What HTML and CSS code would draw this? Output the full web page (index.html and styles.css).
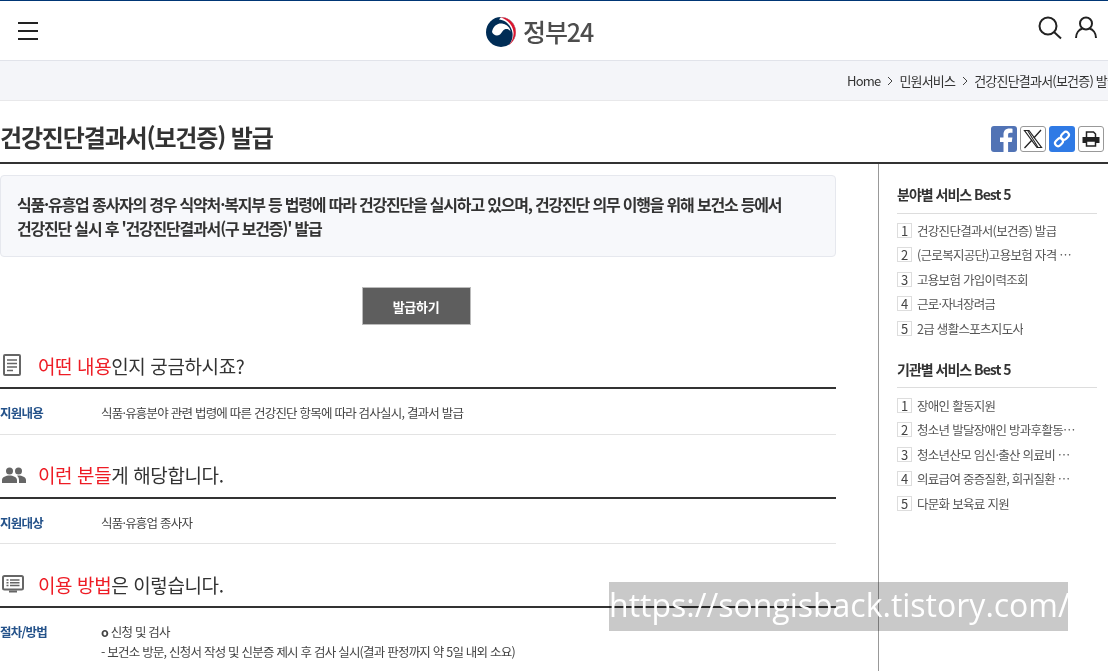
FILE: index.html
```html
<!DOCTYPE html>
<html lang="ko">
<head>
  <meta charset="UTF-8">
  <title>건강진단결과서(보건증) 발급 | 정부24</title>
  <link rel="stylesheet" href="styles.css">
</head>
<body>
  <!-- Header -->
  <div class="header">
    <svg class="menu-icon" width="20" height="18" viewBox="0 0 20 18"><path d="M0 1h20M0 9h20M0 17h20" stroke="#222" stroke-width="2"/></svg>
    <div class="logo">
      <svg width="30" height="30" viewBox="0 0 30 30">
        <circle cx="15" cy="15" r="15" fill="#002d56"/>
        <path d="M15 0A15 15 0 0 1 30 15C30 20 27.500 25 23 28C26 24 27 20 26.500 16C25.500 9 20 3 13 2.500Z" fill="#fff"/>
        <path d="M14 0.300A14.800 14.800 0 0 1 29.800 15C29.800 20 27 25.500 22.500 28.500C25.800 25 28 20 27.500 15C26.800 8 21 2 14 0.300Z" fill="#d9162f"/>
        <path d="M6 15C7 8.500 12 6 16 6.500C21 7 24.500 11 24.500 15C24 12.500 21.500 11.500 19.500 12C16.500 12.800 16 16 14 17.500C11 19.500 7.500 18.500 6 15Z" fill="#fff"/>
      </svg>
      <span class="logo-text">정부24</span>
    </div>
    <div class="header-icons">
      <svg width="24" height="24" viewBox="0 0 24 24" fill="none" stroke="#222" stroke-width="2"><circle cx="10" cy="10" r="8.500"/><path d="M16 16l7 6.500"/></svg>
      <svg width="22" height="24" viewBox="0 0 22 24" fill="none" stroke="#222" stroke-width="2"><circle cx="11" cy="7.500" r="6"/><path d="M1 22c0-5 3-8.500 6.500-9.500M21 22c0-5-3-8.500-6.500-9.500"/></svg>
    </div>
  </div>

  <!-- Breadcrumb -->
  <div class="breadcrumb">
    <span>Home</span>
    <svg class="crumb-arrow" width="6" height="10" viewBox="0 0 6 10"><path d="M1 1l4 4-4 4" fill="none" stroke="#444"/></svg>
    <span>민원서비스</span>
    <svg class="crumb-arrow" width="6" height="10" viewBox="0 0 6 10"><path d="M1 1l4 4-4 4" fill="none" stroke="#444"/></svg>
    <span>건강진단결과서(보건증) 발급</span>
  </div>

  <!-- Title -->
  <div class="title-row">
    <h1>건강진단결과서(보건증) 발급</h1>
    <div class="share">
      <span class="share-btn share-fb">
        <svg width="26" height="26" viewBox="0 0 26 26"><path d="M12.500 26V16H9v-4.500h3.500V8.500c0-4 2.400-6 5.800-6 1.500 0 2.800.1 3.200.2v4h-2.200c-1.800 0-2.200.9-2.200 2.200v2.600h4.300l-.6 4.500h-3.700v10z" fill="#fff"/></svg>
      </span>
      <span class="share-btn share-plain">
        <svg width="20" height="20" viewBox="0 0 20 20"><path d="M1.500 1.500h4.500l12.500 17H14z" fill="none" stroke="#222" stroke-width="1.200"/><path d="M4 1.500h1.200l10.500 17h-1.200z" fill="#222"/><path d="M18 1l-7.200 8M9 11l-7.500 8" stroke="#222" stroke-width="1.300" fill="none"/></svg>
      </span>
      <span class="share-btn share-link">
        <svg width="18" height="18" viewBox="0 0 18 18" fill="none" stroke="#fff" stroke-width="2.200"><rect x="9" y="1.500" width="6" height="8.500" rx="3" transform="rotate(45 12 5.700)"/><rect x="3" y="8" width="6" height="8.500" rx="3" transform="rotate(45 6 12.200)"/></svg>
      </span>
      <span class="share-btn share-plain">
        <svg width="18" height="16" viewBox="0 0 18 16"><path d="M4.500 6V1h7l2 2v3" fill="#fff" stroke="#222" stroke-width="1.500"/><path d="M0.500 6h17v6h-3.500v-2H4v2H0.500z" fill="#222"/><path d="M4.500 10h9v5h-9z" fill="#fff" stroke="#222" stroke-width="1.500"/></svg>
      </span>
    </div>
  </div>

  <div class="layout">
    <!-- Main column -->
    <div class="content">
      <div class="summary">식품·유흥업 종사자의 경우 식약처·복지부 등 법령에 따라 건강진단을 실시하고 있으며, 건강진단 의무 이행을 위해 보건소 등에서<br>건강진단 실시 후 '건강진단결과서(구 보건증)' 발급</div>

      <div class="action"><button class="issue-btn">발급하기</button></div>

      <div class="section-head">
        <span class="section-icon"><svg width="20" height="24" viewBox="0 0 20 24" fill="none"><rect x="2" y="2" width="16" height="20" rx="1" stroke="#666" stroke-width="2"/><path d="M5 7h10M5 10.500h10M5 14h10M5 17.500h6" stroke="#666" stroke-width="1.500"/></svg></span>
        <h2><em>어떤 내용</em>인지 궁금하시죠?</h2>
      </div>
      <div class="info-row">
        <div class="info-label">지원내용</div>
        <div class="info-text">식품·유흥분야 관련 법령에 따른 건강진단 항목에 따라 검사실시, 결과서 발급</div>
      </div>

      <div class="section-head">
        <span class="section-icon"><svg width="24" height="16" viewBox="0 0 24 16" fill="#666"><circle cx="7.500" cy="4" r="3.500"/><circle cx="16.500" cy="4" r="3.500"/><path d="M0 16v-3c0-3 4-4.500 7.500-4.500S15 10 15 13v3zM16.500 8.500c3.500 0 7.500 1.500 7.500 4.500v3h-7v-3c0-1.800-.8-3.200-2-4.200.5-.2 1-.3 1.500-.3z"/></svg></span>
        <h2><em>이런 분들</em>게 해당합니다.</h2>
      </div>
      <div class="info-row">
        <div class="info-label">지원대상</div>
        <div class="info-text">식품·유흥업 종사자</div>
      </div>

      <div class="section-head">
        <span class="section-icon"><svg width="22" height="18" viewBox="0 0 22 18" fill="none"><rect x="1" y="1" width="20" height="13.500" rx="1.500" stroke="#666" stroke-width="2"/><path d="M4.500 5h2M8 5h9.500M4.500 7.800h2M8 7.800h9.500M4.500 10.600h2M8 10.600h9.500" stroke="#666" stroke-width="1.500"/><path d="M7 16.500h8" stroke="#666" stroke-width="2"/></svg></span>
        <h2><em>이용 방법</em>은 이렇습니다.</h2>
      </div>
      <div class="info-row info-row-last">
        <div class="info-label">절차/방법</div>
        <div class="info-text">
          <p class="step"><b>o</b> 신청 및 검사</p>
          <p class="step">- 보건소 방문, 신청서 작성 및 신분증 제시 후 검사 실시(결과 판정까지 약 5일 내외 소요)</p>
        </div>
      </div>
    </div>

    <!-- Side column -->
    <div class="side">
      <h3>분야별 서비스 Best 5</h3>
      <ol class="rank-list">
        <li><span class="rank-num">1</span><span class="rank-name">건강진단결과서(보건증) 발급</span></li>
        <li><span class="rank-num">2</span><span class="rank-name">(근로복지공단)고용보험 자격 이력 내역서</span></li>
        <li><span class="rank-num">3</span><span class="rank-name">고용보험 가입이력조회</span></li>
        <li><span class="rank-num">4</span><span class="rank-name">근로·자녀장려금</span></li>
        <li><span class="rank-num">5</span><span class="rank-name">2급 생활스포츠지도사</span></li>
      </ol>
      <h3 class="side-title-second">기관별 서비스 Best 5</h3>
      <ol class="rank-list rank-list-second">
        <li><span class="rank-num">1</span><span class="rank-name">장애인 활동지원</span></li>
        <li><span class="rank-num">2</span><span class="rank-name">청소년 발달장애인 방과후활동 서비스</span></li>
        <li><span class="rank-num">3</span><span class="rank-name">청소년산모 임신·출산 의료비 지원 사업</span></li>
        <li><span class="rank-num">4</span><span class="rank-name">의료급여 중증질환, 희귀질환 산정특례</span></li>
        <li><span class="rank-num">5</span><span class="rank-name">다문화 보육료 지원</span></li>
      </ol>
    </div>
  </div>

  <!-- Blog watermark over the capture -->
  <div class="watermark"><span class="watermark-text">https://songisback.tistory.com/</span></div>
</body>
</html>
```

FILE: styles.css
```css
html, body {
  height: 671px;
  overflow: hidden;
}

body {
  margin: 0;
  position: relative;
  font-family: "Noto Sans CJK KR", "Noto Sans", sans-serif;
  color: #333;
  background-color: #fff;
}

.header {
  height: 59px;
  border-top: 1px solid #003675;
  border-bottom: 1px solid #e1e3ea;
  display: flex;
  align-items: center;
  justify-content: space-between;
  padding: 0 11px 0 18px;
  position: relative;
}

.menu-icon {
  margin-top: 1px;
}

.logo {
  position: absolute;
  left: 486px;
  top: 16px;
  display: flex;
  align-items: center;
  gap: 7px;
}

.logo-text {
  margin-top: -3px;
  font-size: 25px;
  font-weight: 500;
  letter-spacing: -1.1px;
  line-height: 30px;
  color: #4d4d4d;
}

.header-icons {
  display: flex;
  align-items: center;
  gap: 13px;
  margin-top: -5px;
}

.breadcrumb {
  height: 39px;
  background-color: #f4f5f9;
  border-bottom: 1px solid #e8e8ea;
  display: flex;
  align-items: center;
  gap: 6.500px;
  padding-left: 847px;
  font-size: 13px;
  letter-spacing: -0.8px;
  white-space: nowrap;
  overflow: hidden;
}

.crumb-arrow {
  flex-shrink: 0;
}

.title-row {
  height: 63px;
  box-sizing: border-box;
  border-bottom: 2px solid #333;
  display: flex;
  align-items: flex-end;
  justify-content: space-between;
  padding: 0 4px 10px 0;
}

.title-row h1 {
  margin: 0 0 -3px;
  font-size: 24px;
  font-weight: 700;
  letter-spacing: -1.150px;
  line-height: 36px;
  color: #333;
}

.share {
  display: flex;
  gap: 3px;
}

.share-btn {
  width: 26px;
  height: 26px;
  border-radius: 3px;
  box-sizing: border-box;
  display: flex;
  align-items: center;
  justify-content: center;
  overflow: hidden;
}

.share-fb {
  background-color: #5173b5;
}

.share-plain {
  background-color: #fff;
  border: 1px solid #999;
}

.share-link {
  background-color: #2f7ae5;
}

.layout {
  display: flex;
  height: 507px;
}

.content {
  width: 836px;
  padding-top: 11px;
}

.summary {
  background-color: #f7f8fb;
  border: 1px solid #e6e8ee;
  border-radius: 4px;
  padding: 16px 16px 0;
  height: 64px;
  font-size: 16px;
  font-weight: 700;
  line-height: 24px;
  letter-spacing: -1.200px;
  color: #333;
}

.action {
  display: flex;
  justify-content: center;
  margin-top: 30px;
  margin-left: -4px;
}

.issue-btn {
  width: 109px;
  height: 38px;
  background-color: #5e5e5e;
  border: 1px solid #bbb;
  color: #fff;
  font-family: inherit;
  font-size: 13px;
  font-weight: 700;
  letter-spacing: -0.3px;
}

.section-head {
  height: 64px;
  border-bottom: 2px solid #333;
  display: flex;
  align-items: center;
  padding-top: 18px;
  box-sizing: border-box;
}

.section-icon {
  width: 38px;
  flex-shrink: 0;
  display: flex;
  padding-left: 2px;
  box-sizing: border-box;
}

.section-head h2 {
  margin: 0;
  font-size: 19px;
  font-weight: 400;
  letter-spacing: -0.4px;
  color: #333;
}

.section-head em {
  font-style: normal;
  color: #ee1c25;
}

.info-row {
  display: flex;
  box-sizing: border-box;
  border-bottom: 1px solid #e3e3e3;
  padding-top: 12px;
  height: 45.500px;
  font-size: 12.500px;
  letter-spacing: -0.78px;
  line-height: 23px;
}

.info-row-last {
  border-bottom: none;
  height: auto;
  padding-top: 14px;
  line-height: 20px;
}

.info-label {
  width: 101px;
  flex-shrink: 0;
  font-weight: 700;
  color: #24528a;
}

.info-text {
  color: #444;
}

.step {
  margin: 0;
}

.side {
  flex: 1;
  margin-left: 42px;
  border-left: 1px solid #999;
  padding: 20px 11px 0 18px;
  min-width: 0;
}

.side h3 {
  margin: 0;
  height: 29px;
  font-size: 14px;
  font-weight: 700;
  letter-spacing: -1px;
  line-height: 20px;
  color: #333;
  border-bottom: 1px solid #ddd;
}

.side .side-title-second {
  height: 28px;
}

.rank-list {
  list-style: none;
  margin: 0 0 18px;
  padding: 4px 0 0;
}

.rank-list-second {
  padding-top: 5.500px;
}

.rank-list li {
  display: flex;
  align-items: center;
  height: 24.500px;
  font-size: 12.500px;
  letter-spacing: -0.7px;
  color: #555;
}

.rank-num {
  width: 13px;
  height: 13px;
  line-height: 13px;
  border: 1px solid #ddd;
  text-align: center;
  flex-shrink: 0;
  margin-right: 5px;
  font-size: 13px;
  letter-spacing: 0;
  color: #444;
}

.rank-name {
  max-width: 160px;
  overflow: hidden;
  white-space: nowrap;
  text-overflow: ellipsis;
}

.watermark {
  position: absolute;
  left: 609px;
  top: 582px;
  width: 459px;
  height: 49px;
  color: #fff;
  font-family: "Open Sans", sans-serif;
  font-size: 32px;
  line-height: 45px;
  white-space: nowrap;
}

.watermark::before {
  content: "";
  position: absolute;
  inset: 0;
  background-color: #c9c9c9;
  mix-blend-mode: multiply;
}

.watermark-text {
  position: relative;
}
```
